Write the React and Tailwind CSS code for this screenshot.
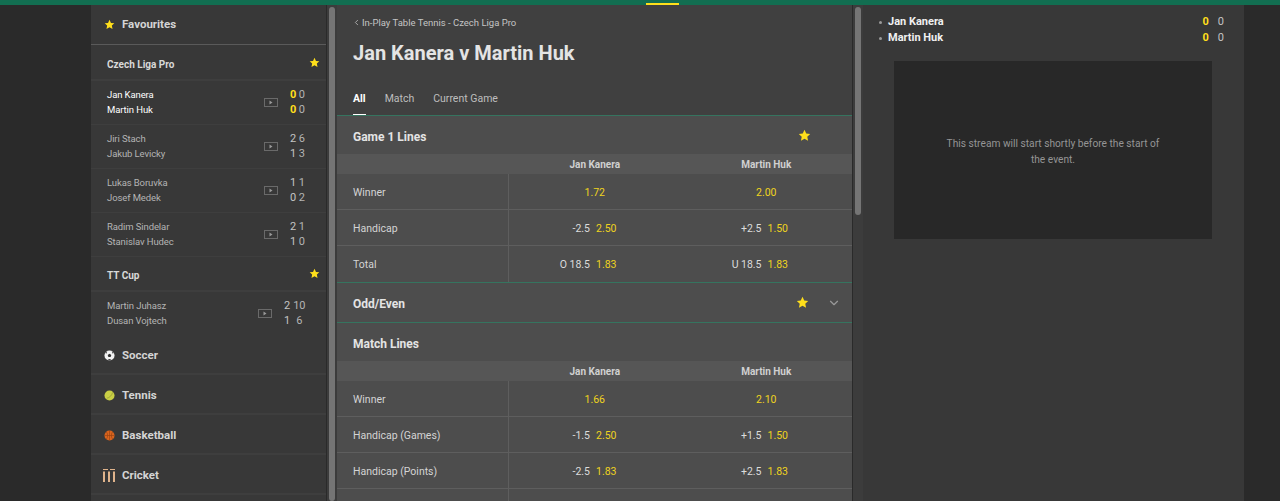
import React from 'react';
import { ChevronLeft, ChevronDown } from 'lucide-react';

const Star = ({ className }) => (
    <svg viewBox="0 0 24 24" className={className} fill="#ffdf1b">
        <path d="M12 1.5l3.2 7 7.3.8-5.4 5 1.500 7.500L12 18l-6.600 3.800 1.500-7.500-5.400-5 7.300-.8z" />
    </svg>
);

const VideoIcon = () => (
    <svg viewBox="0 0 14 9" className="h-[9px] w-[14px]">
        <rect x="0.5" y="0.5" width="13" height="8" fill="none" stroke="#6a6a6a" />
        <path d="M5.5 2.5l3 2-3 2z" fill="#9a9a9a" />
    </svg>
);

const SoccerIcon = () => (
    <svg viewBox="0 0 12 12" className="h-[11px] w-[11px] shrink-0">
        <circle cx="6" cy="6" r="5.5" fill="#f2f2f2" />
        <path d="M6 4l2 1.400-.8 2.200H4.800L4 5.400z" fill="#333" />
        <path d="M1.500 3L3.500 1.500 2.500 4zM10.500 3L8.500 1.500 9.500 4zM4 10.500L6 9.800 8 10.500 6 11.500z" fill="#333" />
    </svg>
);

const TennisIcon = () => (
    <svg viewBox="0 0 12 12" className="h-[11px] w-[11px] shrink-0">
        <circle cx="6" cy="6" r="5.500" fill="#c9cf45" />
        <path d="M3 9c3-.5 5.500-3 6.500-6.500" fill="none" stroke="#8d9230" strokeWidth="0.700" />
    </svg>
);

const BasketballIcon = () => (
    <svg viewBox="0 0 12 12" className="h-[11px] w-[11px] shrink-0">
        <circle cx="6" cy="6" r="5.500" fill="#d9641e" />
        <path d="M.5 6h11M6 .5v11M2.500 2c2 2 2 6 0 8M9.500 2c-2 2-2 6 0 8" fill="none" stroke="#8c3d10" strokeWidth="0.600" />
    </svg>
);

const CricketIcon = () => (
    <svg viewBox="0 0 12 13" className="h-[13px] w-3 shrink-0">
        <path d="M0 .5h5M7 .5h5" stroke="#e0b48c" strokeWidth="1" />
        <path d="M1 2.500v10.500M6 2.500v10.500M11 2.500v10.500" stroke="#e0b48c" strokeWidth="2" />
    </svg>
);

const matches = [
    { a: 'Jiri Stach', b: 'Jakub Levicky', sa: ['2', '6'], sb: ['1', '3'] },
    { a: 'Lukas Boruvka', b: 'Josef Medek', sa: ['1', '1'], sb: ['0', '2'] },
    { a: 'Radim Sindelar', b: 'Stanislav Hudec', sa: ['2', '1'], sb: ['1', '0'] },
];

const MatchRow = ({ a, b, sa, sb, live, wide }) => (
    <div className={`flex items-center pb-[1px] pl-4 pr-[21px] text-[9.5px] leading-[15px] tracking-[-0.1px] ${wide ? 'h-[43px]' : 'h-[44px] border-b border-[#3e3e3e]'} ${live ? 'text-white' : 'text-[#b4b4b4]'}`}>
        <div className="flex-1">
            <div>{a}</div>
            <div>{b}</div>
        </div>
        <VideoIcon />
        <div className={`ml-[12px] text-[11px] tracking-normal ${wide ? 'w-[21px]' : 'w-[15px]'}`}>
            <div className={`flex ${wide ? 'gap-[3px]' : 'justify-between'}`}>
                <span className={live ? 'font-bold text-[#ffdf1b]' : 'text-[#c4c4c4]'}>{sa[0]}</span>
                <span className="text-[#b4b4b4]">{sa[1]}</span>
            </div>
            <div className={`flex ${wide ? 'gap-[6px]' : 'justify-between'}`}>
                <span className={live ? 'font-bold text-[#ffdf1b]' : 'text-[#c4c4c4]'}>{sb[0]}</span>
                <span className="text-[#b4b4b4]">{sb[1]}</span>
            </div>
        </div>
    </div>
);

const CompHeader = ({ title, height, pad }) => (
    <div className={`flex ${height} items-center justify-between border-b-2 border-[#3e3e3e] pl-4 pr-[6px] text-[10px] font-bold text-[#d8d8d8]`}>
        <span className={pad}>{title}</span>
        <Star className="h-[11px] w-[11px]" />
    </div>
);

const SportRow = ({ icon, label }) => (
    <div className="flex h-[40px] items-center gap-[8px] border-b-2 border-[#3e3e3e] pl-[13px] pt-[3px] text-[11.5px] font-bold text-[#d4d4d4]">
        <div className="flex w-[10px] justify-center">{icon}</div>
        <span>{label}</span>
    </div>
);

const Odds = ({ line, price }) => (
    <div className={`flex flex-1 items-center gap-[6px] pt-[2px] text-[10.5px] ${line ? 'justify-end pr-[64px]' : 'justify-center'}`}>
        {line && <span className="text-[#dcdcdc]">{line}</span>}
        <span className="text-[#efd31e]">{price}</span>
    </div>
);

const MarketRow = ({ label, left, right, last }) => (
    <div className={`flex h-[36px] ${last ? '' : 'border-b border-[#5e5e5e]'}`}>
        <div className="flex w-[172px] items-center border-r border-[#5e5e5e] pl-4 pt-[2px] text-[10.5px] text-[#d4d4d4]">{label}</div>
        <Odds {...left} />
        <Odds {...right} />
    </div>
);

const ColumnHeads = () => (
    <div className="flex h-[20px] items-center bg-[#565656] text-[10px] font-bold text-[#d0d0d0]">
        <div className="w-[172px]" />
        <div className="flex-1 text-center">Jan Kanera</div>
        <div className="flex-1 text-center">Martin Huk</div>
    </div>
);

const Scrollbar = ({ thumb }) => (
    <div className="ml-[1px] w-[10px] shrink-0 bg-[#3c3c3c] pt-[2px]">
        <div className={`mx-auto w-[6px] rounded-full bg-[#757575] ${thumb}`} />
    </div>
);

export default function App() {
    return (
        <div className="flex h-[501px] w-[1280px] flex-col overflow-hidden bg-[#2a2a2a] font-['Roboto',sans-serif]">
            <div className="relative h-[5px] shrink-0 bg-[#126e51]">
                <div className="absolute left-[646px] top-[3px] h-[2px] w-[33px] bg-[#ffdf1b]" />
            </div>
            <div className="flex min-h-0 flex-1 pl-[91px]">
                {/* left nav */}
                <aside className="w-[235px] shrink-0 overflow-hidden bg-[#383838]">
                    <div className="flex h-[40px] items-center gap-[7px] border-b border-[#5a5a5a] pl-[13px] text-[11.5px] font-bold text-[#d4d4d4]">
                        <Star className="h-[11px] w-[11px]" />
                        <span>Favourites</span>
                    </div>
                    <CompHeader title="Czech Liga Pro" height="h-[36px]" pad="pt-[5px]" />
                    <MatchRow a="Jan Kanera" b="Martin Huk" sa={['0', '0']} sb={['0', '0']} live />
                    {matches.map((m) => (
                        <MatchRow key={m.a} {...m} />
                    ))}
                    <CompHeader title="TT Cup" height="h-[35px]" pad="pt-[3px]" />
                    <MatchRow a="Martin Juhasz" b="Dusan Vojtech" sa={['2', '10']} sb={['1', '6']} wide />
                    <SportRow icon={<SoccerIcon />} label="Soccer" />
                    <SportRow icon={<TennisIcon />} label="Tennis" />
                    <SportRow icon={<BasketballIcon />} label="Basketball" />
                    <SportRow icon={<CricketIcon />} label="Cricket" />
                </aside>
                <Scrollbar thumb="h-[494px]" />

                {/* match markets */}
                <main className="flex w-[515px] shrink-0 flex-col overflow-hidden bg-[#404040]">
                    <div className="pl-4 pt-[10px]">
                        <div className="flex items-center text-[9.5px] leading-[15px] text-[#c4c4c4]">
                            <ChevronLeft className="-ml-px mr-[1px] h-[9px] w-[9px]" />
                            <span>In-Play Table Tennis - Czech Liga Pro</span>
                        </div>
                        <h1 className="mt-[8px] text-[20px] font-bold leading-[30px] text-[#e4e4e4]">Jan Kanera v Martin Huk</h1>
                        <div className="mt-[23px] flex gap-[19px] text-[10.5px] leading-[16px] text-[#bebebe]">
                            <div className="h-[24px] border-b border-white font-bold text-white">All</div>
                            <div>Match</div>
                            <div>Current Game</div>
                        </div>
                    </div>
                    <div className="flex-1 bg-[#4d4d4d]">
                        <div className="flex h-[39px] items-center justify-between border-t border-[#35745f] pl-4 pr-[41px] text-[12px] font-bold text-[#e4e4e4]">
                            <span className="pt-[3px]">Game 1 Lines</span>
                            <Star className="h-[13px] w-[13px]" />
                        </div>
                        <ColumnHeads />
                        <MarketRow label="Winner" left={{ price: '1.72' }} right={{ price: '2.00' }} />
                        <MarketRow label="Handicap" left={{ line: '-2.5', price: '2.50' }} right={{ line: '+2.5', price: '1.50' }} />
                        <MarketRow label="Total" left={{ line: 'O 18.5', price: '1.83' }} right={{ line: 'U 18.5', price: '1.83' }} last />
                        <div className="flex h-[41px] items-center border-y border-[#35745f] pl-4 pr-[11px] text-[12px] font-bold text-[#e4e4e4]">
                            <span className="flex-1 pt-[2px]">Odd/Even</span>
                            <Star className="h-[13px] w-[13px]" />
                            <ChevronDown className="ml-[18px] h-[14px] w-[14px] text-[#9a9a9a]" />
                        </div>
                        <div className="flex h-[38px] items-center pl-4 pt-[4px] text-[12px] font-bold text-[#e4e4e4]">Match Lines</div>
                        <ColumnHeads />
                        <MarketRow label="Winner" left={{ price: '1.66' }} right={{ price: '2.10' }} />
                        <MarketRow label="Handicap (Games)" left={{ line: '-1.5', price: '2.50' }} right={{ line: '+1.5', price: '1.50' }} />
                        <MarketRow label="Handicap (Points)" left={{ line: '-2.5', price: '1.83' }} right={{ line: '+2.5', price: '1.83' }} />
                        <div className="h-[36px] w-[172px] border-r border-[#5e5e5e]" />
                    </div>
                </main>
                <Scrollbar thumb="h-[208px]" />

                {/* stream panel */}
                <section className="w-[381px] shrink-0 bg-[#383838] pl-[16px] pr-[20px] pt-[9px]">
                    {['Jan Kanera', 'Martin Huk'].map((name) => (
                        <div key={name} className="flex h-[16px] items-center text-[11px] font-bold text-[#f0f0f0]">
                            <span className="mr-[6px] h-[3px] w-[3px] rounded-full bg-[#9a9a9a]" />
                            <span className="flex-1">{name}</span>
                            <span className="text-[#ffdf1b]">0</span>
                            <span className="ml-[9px] font-normal text-[#c4c4c4]">0</span>
                        </div>
                    ))}
                    <div className="ml-[15px] mr-[12px] mt-[15px] flex h-[178px] items-center justify-center bg-[#282828] px-[50px] pt-[4px] text-center text-[10.2px] leading-[16px] text-[#959595]">
                        This stream will start shortly before the start of the event.
                    </div>
                </section>
            </div>
        </div>
    );
}
